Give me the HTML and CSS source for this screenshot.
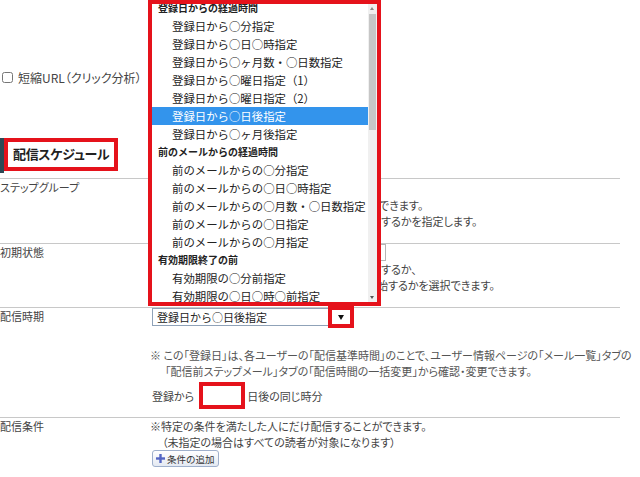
FILE: index.html
```html
<!DOCTYPE html>
<html>
<head>
  <meta charset="utf-8">
  <title>配信スケジュール</title>
  <link rel="stylesheet" href="styles.css">
</head>
<body>
  <div class="option-row">
    <input type="checkbox" id="shortUrl">
    <label for="shortUrl">短縮URL（クリック分析）</label>
    <span class="note">※URLを短縮</span>
  </div>

  <div class="section-head">
    <span class="bar"></span>
    <h2 class="mark">配信スケジュール</h2>
  </div>

  <div class="form-table">
    <div class="row row-group">
      <div class="label">ステップグループ</div>
      <div class="field">
        <div class="select">未選択</div>
        <p class="desc"><span class="lead" style="width:229px">グループ単位でまとめて管理</span>できます。</p>
        <p class="desc"><span class="lead" style="width:231px">どのメールから配信を開始</span>するかを指定します。</p>
      </div>
    </div>

    <div class="row row-state">
      <div class="label">初期状態</div>
      <div class="field">
        <div class="text-box"></div>
        <p class="desc"><span class="lead" style="width:231px">登録直後から配信</span>するか、</p>
        <p class="desc"><span class="lead" style="width:227px">停止状態で登録して後から配信を開</span>始するかを選択できます。</p>
      </div>
    </div>

    <div class="row row-timing">
      <div class="label">配信時期</div>
      <div class="field">
        <div class="select timing">
          登録日から○日後指定
          <span class="arrow-mark"><span class="tri"></span></span>
        </div>
        <p class="note-line">※ この「登録日」は、各ユーザーの「配信基準時間」のことで、ユーザー情報ページの「メール一覧」タブの</p>
        <p class="note-line indent">「配信前ステップメール」タブの「配信時間の一括変更」から確認・変更できます。</p>
        <div class="days-row">
          <span>登録から</span>
          <input type="text" class="days-input">
          <span>日後の同じ時分</span>
        </div>
      </div>
    </div>

    <div class="row row-cond">
      <div class="label">配信条件</div>
      <div class="field">
        <p class="desc">※特定の条件を満たした人にだけ配信することができます。</p>
        <p class="desc indent">（未指定の場合はすべての読者が対象になります）</p>
        <button type="button" class="btn-add">
          <svg width="9" height="9" viewBox="0 0 9 9"><rect x="3.3" y="0" width="2.4" height="9" fill="#5466c4"/><rect x="0" y="3.3" width="9" height="2.4" fill="#5466c4"/></svg>
          条件の追加
        </button>
      </div>
    </div>
  </div>

  <div class="dropdown">
    <div class="dd-options">
      <ul class="dd-inner">
        <li class="group">登録日からの経過時間</li>
        <li>登録日から○分指定</li>
        <li>登録日から○日○時指定</li>
        <li>登録日から○ヶ月数・○日数指定</li>
        <li>登録日から○曜日指定（1）</li>
        <li>登録日から○曜日指定（2）</li>
        <li class="selected">登録日から○日後指定</li>
        <li>登録日から○ヶ月後指定</li>
        <li class="group">前のメールからの経過時間</li>
        <li>前のメールからの○分指定</li>
        <li>前のメールからの○日○時指定</li>
        <li>前のメールからの○月数・○日数指定</li>
        <li>前のメールからの○日指定</li>
        <li>前のメールからの○月指定</li>
        <li class="group">有効期限終了の前</li>
        <li>有効期限の○分前指定</li>
        <li>有効期限の○日○時○前指定</li>
      </ul>
    </div>
    <div class="dd-scroll">
      <span class="up"></span>
      <span class="thumb"></span>
      <span class="down"></span>
    </div>
  </div>
</body>
</html>
```

FILE: styles.css
```css
body {
  margin: 0;
  background-color: #fff;
  font-family: "Noto Sans CJK JP", "Noto Sans", sans-serif;
  font-size: 11px;
  color: #444;
  font-feature-settings: "palt";
  position: relative;
}
p, ul, h2 {
  margin: 0;
  padding: 0;
}
.option-row {
  display: flex;
  align-items: center;
  height: 16px;
  margin-top: 69px;
  padding-left: 2px;
  font-size: 12px;
}
.option-row input {
  width: 11px;
  height: 11px;
  margin: 0 5px 0 0;
}
.option-row .note {
  margin-left: 6px;
  white-space: nowrap;
}
.section-head {
  display: flex;
  margin-top: 53px;
  margin-bottom: 5px;
}
.section-head .bar {
  width: 4px;
  height: 35px;
  background-color: #2c4a55;
}
.section-head .mark {
  box-sizing: border-box;
  width: 114px;
  height: 33px;
  border: 4px solid #e5121b;
  padding-left: 5px;
  font-size: 13px;
  line-height: 24px;
  color: #222;
  letter-spacing: -0.3px;
}
.form-table {
  width: 620px;
}
.row {
  display: grid;
  grid-template-columns: 150px 1fr;
  border-top: 1px solid #c8c8c8;
  line-height: 16px;
}
.row-group { padding-bottom: 14px; }
.row-state { padding-bottom: 14px; }
.row-timing { padding-bottom: 8px; }
.row-cond { padding-bottom: 12px; }
.label {
  white-space: nowrap;
}
.desc {
  white-space: nowrap;
}
.desc .lead {
  display: inline-block;
  overflow: hidden;
  vertical-align: top;
  color: transparent;
}
.indent {
  padding-left: 12px;
}
.select {
  position: relative;
  box-sizing: border-box;
  width: 200px;
  height: 18px;
  margin-left: 2px;
  border: 1px solid #8fa2b8;
  padding-left: 4px;
  line-height: 16px;
  color: #222;
  font-feature-settings: normal;
}
.text-box {
  box-sizing: border-box;
  width: 234px;
  height: 17px;
  margin-left: 2px;
  border: 1px solid #b5b5b5;
}
.arrow-mark {
  position: absolute;
  left: 175px;
  top: -3px;
  box-sizing: border-box;
  width: 26px;
  height: 22px;
  border: 4px solid #e5121b;
  display: flex;
  align-items: center;
  justify-content: center;
}
.tri {
  width: 0;
  height: 0;
  border-left: 3px solid transparent;
  border-right: 3px solid transparent;
  border-top: 5px solid #111;
}
.note-line {
  white-space: nowrap;
  color: #555;
}
.row-timing .note-line:first-of-type {
  margin-top: 21px;
}
.note-line.indent {
  padding-left: 15px;
}
.days-row {
  display: flex;
  align-items: center;
  margin-top: 3px;
  margin-left: 2px;
}
.days-input {
  box-sizing: border-box;
  width: 46px;
  height: 27px;
  margin: 0 2px 0 5px;
  border: 4px solid #e5121b;
  padding: 0;
}
.btn-add {
  display: inline-flex;
  align-items: center;
  gap: 2px;
  height: 17px;
  margin-left: 2px;
  padding: 0 3px;
  border: 1px solid #9fb0cc;
  border-radius: 3px;
  background: linear-gradient(#ffffff, #e4e9f2);
  font-family: "Noto Sans CJK JP", sans-serif;
  font-size: 9.5px;
  color: #333;
}
.dropdown {
  position: absolute;
  left: 148px;
  top: 0;
  box-sizing: border-box;
  width: 233px;
  height: 306px;
  border: 4px solid #e5121b;
  background-color: #fff;
  display: flex;
}
.dd-options {
  flex: 1;
  overflow: hidden;
}
.dd-inner {
  list-style: none;
  margin-top: -5px;
  font-size: 11.4px;
  color: #222;
  font-feature-settings: normal;
}
.dd-inner li {
  height: 18px;
  line-height: 18px;
  padding-left: 20px;
  white-space: nowrap;
}
.dd-inner li.group {
  padding-left: 6px;
  font-size: 10px;
  font-weight: bold;
}
.dd-inner li.selected {
  background-color: #3394ec;
  color: #fff;
}
.dd-scroll {
  position: relative;
  width: 9px;
  background-color: #f0f0f0;
}
.dd-scroll .thumb {
  position: absolute;
  left: 1px;
  top: 10px;
  width: 7px;
  height: 116px;
  background-color: #c6c6c6;
}
.dd-scroll .up, .dd-scroll .down {
  position: absolute;
  left: 2px;
  width: 0;
  height: 0;
  border-left: 2.5px solid transparent;
  border-right: 2.5px solid transparent;
}
.dd-scroll .up {
  top: 3px;
  border-bottom: 3px solid #888;
}
.dd-scroll .down {
  bottom: 3px;
  border-top: 3px solid #555;
}
```
